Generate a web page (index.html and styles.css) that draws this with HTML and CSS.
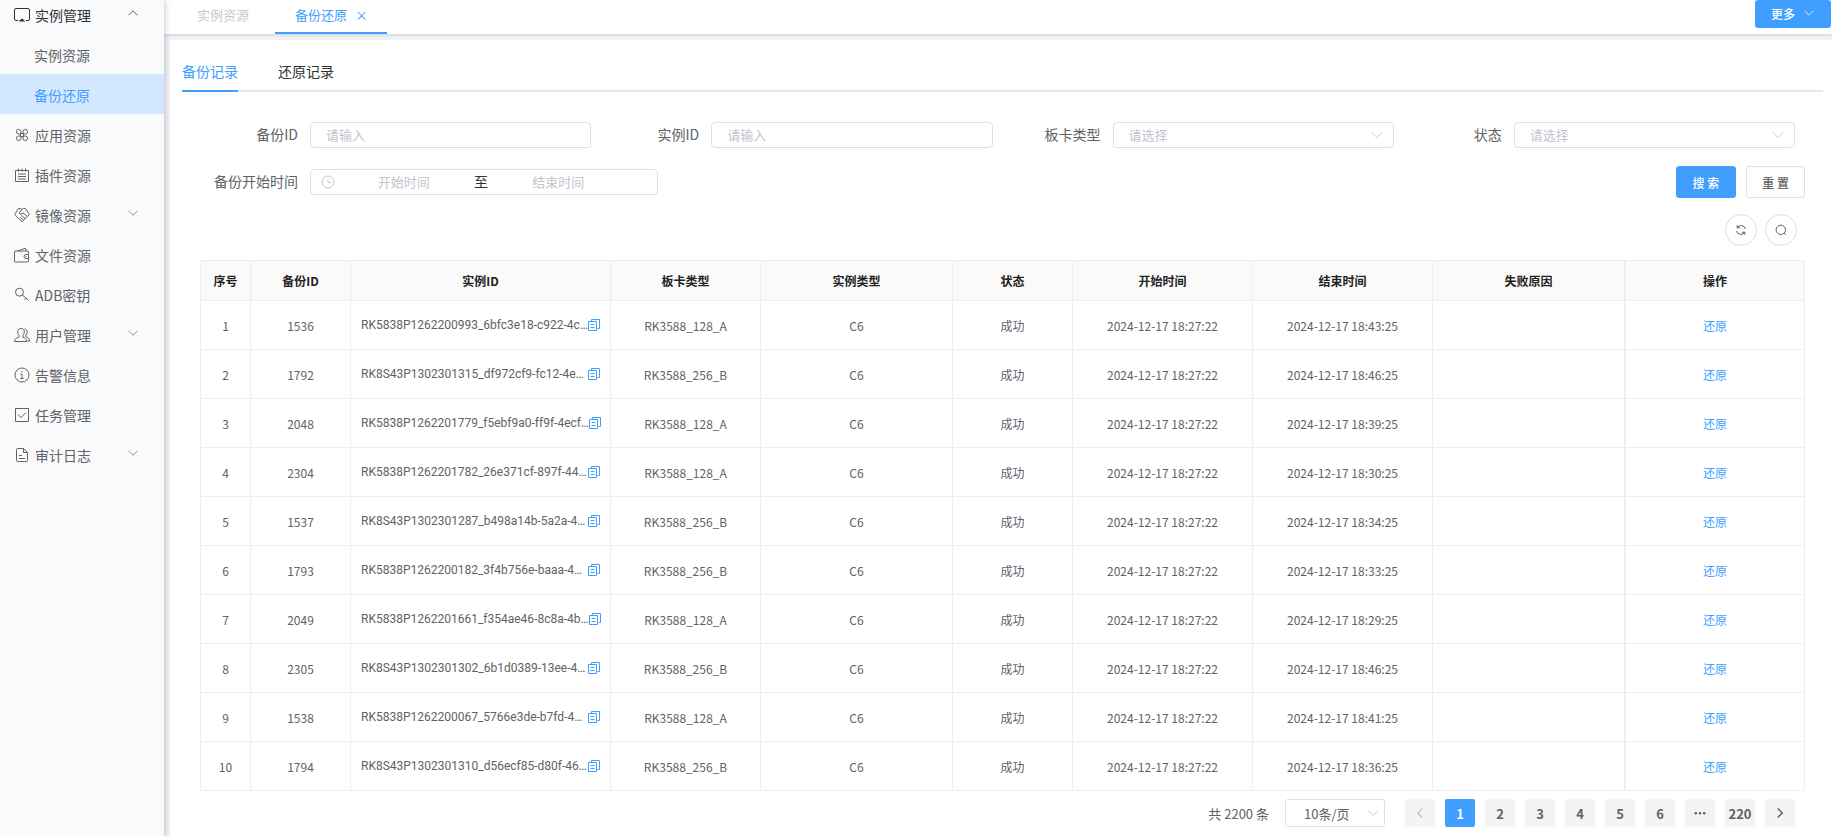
FILE: index.html
```html
<!DOCTYPE html>
<html lang="zh-CN">
<head>
  <meta charset="UTF-8">
  <meta name="viewport" content="width=device-width, initial-scale=1.0">
  <title>备份还原</title>
  <link rel="stylesheet" href="styles.css">
</head>
<body>
  <!-- 图标 -->
  <svg class="sprite" aria-hidden="true">
    <symbol id="i-down" viewBox="0 0 16 16"><path d="M2 5l6 6 6-6"/></symbol>
    <symbol id="i-up" viewBox="0 0 16 16"><path d="M2 11l6-6 6 6"/></symbol>
    <symbol id="i-more" viewBox="0 0 12 12"><path class="solid" d="M1 5.500h1.500v1.500H1zM5.200 5.500h1.500v1.500H5.200zM9.500 5.500H11v1.500H9.500z"/></symbol>
    <symbol id="i-copy" viewBox="0 0 12 12"><path d="M3.500 2.500v-2h8v9h-2M.5 2.500h8v9h-8zM2.500 5.500h4M2.500 8.500h4"/></symbol>
    <symbol id="i-monitor" viewBox="0 0 16 16"><path d="M4 13.500H2A1.500 1.500 0 0 1 .5 12V3A1.500 1.500 0 0 1 2 1.500h12A1.500 1.500 0 0 1 15.500 3v9a1.500 1.500 0 0 1-1.500 1.500h-2"/><path class="solid" d="M8 12l2.500 2h-5z"/></symbol>
    <symbol id="i-apps" viewBox="0 0 16 16"><path d="M7 7H4.800a2.300 2.300 0 1 1 2.200-2.300zM9 7h2.200A2.300 2.300 0 1 0 9 4.700zM7 9H4.800A2.300 2.300 0 1 0 7 11.300zM9 9h2.200A2.300 2.300 0 1 1 9 11.300zM6.500 6.500h3v3h-3z"/></symbol>
    <symbol id="i-note" viewBox="0 0 16 16"><path d="M1.500 3.500h13v11h-13zM4.500 1.500v3M8 1.500v3M11.500 1.500v3M4 7h8M4 9.500h8M4 12h8"/></symbol>
    <symbol id="i-shake" viewBox="0 0 16 16"><path d="M4.500 1.500L.6 7.500l7.400 7.300 7.400-7.300-3.900-6h-2L8 2.500l-1.500-1zM8 2.500L5 6c1 1.800 2.800 1.300 4 0l4.500 3.500M7.500 8.500l4 3M6 10.200l3.500 3"/></symbol>
    <symbol id="i-wallet" viewBox="0 0 16 16"><path d="M14.500 7V5a1 1 0 0 0-1-1h-12a1 1 0 0 0-1 1v9a1 1 0 0 0 1 1h12a1 1 0 0 0 1-1v-2M3.500 4l8-2.800L12.500 4M14.500 7.500H12a2 2 0 0 0 0 4h2.500zM11.500 9.500h1"/></symbol>
    <symbol id="i-key" viewBox="0 0 16 16"><path d="M9.500 5.200a4 4 0 1 1-8 0 4 4 0 0 1 8 0zM8.300 8l6.500 5.500M12 11.200l-1.600 1.700"/></symbol>
    <symbol id="i-users" viewBox="0 0 16 16"><path d="M7 1.500c2.200 0 3.300 1.400 3.300 3.500 0 1.600-.6 2.900-1.500 3.700v1.500c2 .6 3.700 1.500 3.700 4.300H.5c0-2.800 2.200-3.700 4.500-4.300V8.700C4.200 7.900 3.700 6.600 3.700 5 3.700 2.900 4.800 1.500 7 1.500zM10.500 2c1.800.2 2.700 1.400 2.700 3.200 0 1.400-.6 2.500-1.400 3.300v1.300c2 .5 3.700 1.500 3.700 4.200H13"/></symbol>
    <symbol id="i-info" viewBox="0 0 16 16"><path d="M15 8A7 7 0 1 1 1 8a7 7 0 0 1 14 0zM6.500 7H8v4.500M6.300 11.500h3.400M8 4v1.500"/></symbol>
    <symbol id="i-check" viewBox="0 0 16 16"><path d="M1.500 1.500h13v13h-13zM4 7.500l3 3 5-5"/></symbol>
    <symbol id="i-doc" viewBox="0 0 16 16"><path d="M9.500 1.500h-6a1 1 0 0 0-1 1v11a1 1 0 0 0 1 1h9a1 1 0 0 0 1-1v-8zM9.500 1.500v4h4M5 8.500h3M5 11.500h6"/></symbol>
    <symbol id="i-clock" viewBox="0 0 14 14"><path d="M13 7A6 6 0 1 1 1 7a6 6 0 0 1 12 0zM7 3.500v4h3"/></symbol>
    <symbol id="i-refresh" viewBox="0 0 12 12"><path d="M2.200 4.200v-3M2.200 3.700A4.500 4.500 0 0 1 10.400 5M2.200 3.700H5M9.800 7.800v3M9.800 8.300A4.500 4.500 0 0 1 1.600 7M9.800 8.300H7"/></symbol>
    <symbol id="i-search" viewBox="0 0 12 12"><path d="M10.500 5.800a4.700 4.700 0 1 1-9.400 0 4.700 4.700 0 0 1 9.400 0zM9 9.200l1.800 1.800"/></symbol>
  </svg>

  <div class="layout">
    <nav class="sidebar">
      <ul class="menu">
        <li><a class="menu-item open" href="#"><svg class="icon"><use href="#i-monitor"/></svg>实例管理<svg class="arrow"><use href="#i-up"/></svg></a></li>
        <li><a class="menu-item sub" href="#">实例资源</a></li>
        <li><a class="menu-item sub active" href="#">备份还原</a></li>
        <li><a class="menu-item" href="#"><svg class="icon"><use href="#i-apps"/></svg>应用资源</a></li>
        <li><a class="menu-item" href="#"><svg class="icon"><use href="#i-note"/></svg>插件资源</a></li>
        <li><a class="menu-item" href="#"><svg class="icon"><use href="#i-shake"/></svg>镜像资源<svg class="arrow"><use href="#i-down"/></svg></a></li>
        <li><a class="menu-item" href="#"><svg class="icon"><use href="#i-wallet"/></svg>文件资源</a></li>
        <li><a class="menu-item" href="#"><svg class="icon"><use href="#i-key"/></svg>ADB密钥</a></li>
        <li><a class="menu-item" href="#"><svg class="icon"><use href="#i-users"/></svg>用户管理<svg class="arrow"><use href="#i-down"/></svg></a></li>
        <li><a class="menu-item" href="#"><svg class="icon"><use href="#i-info"/></svg>告警信息</a></li>
        <li><a class="menu-item" href="#"><svg class="icon"><use href="#i-check"/></svg>任务管理</a></li>
        <li><a class="menu-item" href="#"><svg class="icon"><use href="#i-doc"/></svg>审计日志<svg class="arrow"><use href="#i-down"/></svg></a></li>
      </ul>
    </nav>

    <div class="main">
      <header class="tabbar">
        <a class="page-tab" href="#">实例资源</a>
        <a class="page-tab active" href="#">备份还原<span class="close">×</span></a>
        <button class="btn-more" type="button">更多<svg class="arrow"><use href="#i-down"/></svg></button>
      </header>

      <main class="card">
        <div class="tabs">
          <a class="tab active" href="#">备份记录</a>
          <a class="tab" href="#">还原记录</a>
        </div>

        <div class="content">
          <form class="search-form">
            <div class="form-row">
              <div class="form-item">
                <label for="backupId">备份ID</label>
                <input class="field" type="text" id="backupId" placeholder="请输入">
              </div>
              <div class="form-item">
                <label for="instanceId">实例ID</label>
                <input class="field" type="text" id="instanceId" placeholder="请输入">
              </div>
              <div class="form-item">
                <label for="boardType">板卡类型</label>
                <div class="select-box">
                  <select class="field" id="boardType">
                    <option value="">请选择</option>
                  </select>
                  <svg class="select-arrow"><use href="#i-down"/></svg>
                </div>
              </div>
              <div class="form-item">
                <label for="status">状态</label>
                <div class="select-box">
                  <select class="field" id="status">
                    <option value="">请选择</option>
                  </select>
                  <svg class="select-arrow"><use href="#i-down"/></svg>
                </div>
              </div>
            </div>
            <div class="form-row second">
              <div class="form-item">
                <label for="startTime">备份开始时间</label>
                <div class="date-range">
                  <svg class="clock"><use href="#i-clock"/></svg>
                  <input type="text" id="startTime" placeholder="开始时间">
                  <span class="separator">至</span>
                  <input type="text" id="endTime" aria-label="结束时间" placeholder="结束时间">
                </div>
              </div>
              <div class="form-buttons">
                <button class="btn primary" type="button">搜 索</button>
                <button class="btn" type="reset">重 置</button>
              </div>
            </div>
          </form>

          <div class="toolbar">
            <button class="btn-circle" type="button" aria-label="刷新"><svg><use href="#i-refresh"/></svg></button>
            <button class="btn-circle" type="button" aria-label="搜索"><svg><use href="#i-search"/></svg></button>
          </div>

          <table class="table">
            <colgroup>
              <col class="w-index"><col class="w-id"><col class="w-instance"><col class="w-board"><col>
              <col class="w-status"><col class="w-time"><col class="w-time"><col><col class="w-time">
            </colgroup>
            <thead>
              <tr>
                <th>序号</th><th>备份ID</th><th>实例ID</th><th>板卡类型</th><th>实例类型</th>
                <th>状态</th><th>开始时间</th><th>结束时间</th><th>失败原因</th><th class="fixed">操作</th>
              </tr>
            </thead>
            <tbody>
              <tr>
                <td>1</td><td>1536</td>
                <td><div class="instance">RK5838P1262200993_6bfc3e18-c922-4c…<svg><use href="#i-copy"/></svg></div></td>
                <td>RK3588_128_A</td><td>C6</td><td>成功</td>
                <td>2024-12-17 18:27:22</td><td>2024-12-17 18:43:25</td><td></td>
                <td class="fixed"><a href="#">还原</a></td>
              </tr>
              <tr>
                <td>2</td><td>1792</td>
                <td><div class="instance">RK8S43P1302301315_df972cf9-fc12-4e…<svg><use href="#i-copy"/></svg></div></td>
                <td>RK3588_256_B</td><td>C6</td><td>成功</td>
                <td>2024-12-17 18:27:22</td><td>2024-12-17 18:46:25</td><td></td>
                <td class="fixed"><a href="#">还原</a></td>
              </tr>
              <tr>
                <td>3</td><td>2048</td>
                <td><div class="instance">RK5838P1262201779_f5ebf9a0-ff9f-4ecf…<svg><use href="#i-copy"/></svg></div></td>
                <td>RK3588_128_A</td><td>C6</td><td>成功</td>
                <td>2024-12-17 18:27:22</td><td>2024-12-17 18:39:25</td><td></td>
                <td class="fixed"><a href="#">还原</a></td>
              </tr>
              <tr>
                <td>4</td><td>2304</td>
                <td><div class="instance">RK5838P1262201782_26e371cf-897f-44…<svg><use href="#i-copy"/></svg></div></td>
                <td>RK3588_128_A</td><td>C6</td><td>成功</td>
                <td>2024-12-17 18:27:22</td><td>2024-12-17 18:30:25</td><td></td>
                <td class="fixed"><a href="#">还原</a></td>
              </tr>
              <tr>
                <td>5</td><td>1537</td>
                <td><div class="instance">RK8S43P1302301287_b498a14b-5a2a-4…<svg><use href="#i-copy"/></svg></div></td>
                <td>RK3588_256_B</td><td>C6</td><td>成功</td>
                <td>2024-12-17 18:27:22</td><td>2024-12-17 18:34:25</td><td></td>
                <td class="fixed"><a href="#">还原</a></td>
              </tr>
              <tr>
                <td>6</td><td>1793</td>
                <td><div class="instance">RK5838P1262200182_3f4b756e-baaa-4…<svg><use href="#i-copy"/></svg></div></td>
                <td>RK3588_256_B</td><td>C6</td><td>成功</td>
                <td>2024-12-17 18:27:22</td><td>2024-12-17 18:33:25</td><td></td>
                <td class="fixed"><a href="#">还原</a></td>
              </tr>
              <tr>
                <td>7</td><td>2049</td>
                <td><div class="instance">RK5838P1262201661_f354ae46-8c8a-4b…<svg><use href="#i-copy"/></svg></div></td>
                <td>RK3588_128_A</td><td>C6</td><td>成功</td>
                <td>2024-12-17 18:27:22</td><td>2024-12-17 18:29:25</td><td></td>
                <td class="fixed"><a href="#">还原</a></td>
              </tr>
              <tr>
                <td>8</td><td>2305</td>
                <td><div class="instance">RK8S43P1302301302_6b1d0389-13ee-4…<svg><use href="#i-copy"/></svg></div></td>
                <td>RK3588_256_B</td><td>C6</td><td>成功</td>
                <td>2024-12-17 18:27:22</td><td>2024-12-17 18:46:25</td><td></td>
                <td class="fixed"><a href="#">还原</a></td>
              </tr>
              <tr>
                <td>9</td><td>1538</td>
                <td><div class="instance">RK5838P1262200067_5766e3de-b7fd-4…<svg><use href="#i-copy"/></svg></div></td>
                <td>RK3588_128_A</td><td>C6</td><td>成功</td>
                <td>2024-12-17 18:27:22</td><td>2024-12-17 18:41:25</td><td></td>
                <td class="fixed"><a href="#">还原</a></td>
              </tr>
              <tr>
                <td>10</td><td>1794</td>
                <td><div class="instance">RK8S43P1302301310_d56ecf85-d80f-46…<svg><use href="#i-copy"/></svg></div></td>
                <td>RK3588_256_B</td><td>C6</td><td>成功</td>
                <td>2024-12-17 18:27:22</td><td>2024-12-17 18:36:25</td><td></td>
                <td class="fixed"><a href="#">还原</a></td>
              </tr>
            </tbody>
          </table>

          <div class="pagination">
            <span class="total">共 2200 条</span>
            <div class="select-box page-size">
              <select class="field" aria-label="每页条数">
                <option>10条/页</option>
              </select>
              <svg class="select-arrow"><use href="#i-down"/></svg>
            </div>
            <button class="page prev" type="button" aria-label="上一页" disabled><svg><use href="#i-down"/></svg></button>
            <button class="page active" type="button">1</button>
            <button class="page" type="button">2</button>
            <button class="page" type="button">3</button>
            <button class="page" type="button">4</button>
            <button class="page" type="button">5</button>
            <button class="page" type="button">6</button>
            <button class="page more" type="button" aria-label="更多页"><svg><use href="#i-more"/></svg></button>
            <button class="page" type="button">220</button>
            <button class="page next" type="button" aria-label="下一页"><svg><use href="#i-down"/></svg></button>
          </div>
        </div>
      </main>
    </div>
  </div>
</body>
</html>
```

FILE: styles.css
```css
* {
  box-sizing: border-box;
}

body {
  margin: 0;
  font-family: "Noto Sans CJK SC", sans-serif;
  font-size: 14px;
  color: #606266;
  background-color: #f0f2f5;
}

a {
  color: inherit;
  text-decoration: none;
}

button,
input,
select {
  font-family: inherit;
}

button {
  cursor: pointer;
}

svg {
  fill: none;
  stroke: currentColor;
  stroke-width: 1px;
  flex-shrink: 0;
}

.solid {
  fill: currentColor;
}

.sprite {
  position: absolute;
  width: 0;
  height: 0;
}

.layout {
  display: flex;
  min-height: 100vh;
}

/* 侧边菜单 */
.sidebar {
  width: 164px;
  flex-shrink: 0;
  background-color: #f9fafc;
  box-shadow: 0 0 6px rgba(0, 21, 41, 0.3);
  z-index: 1;
}

.menu {
  list-style: none;
  margin: -6px 0 0;
  padding: 0;
}

.menu-item {
  display: flex;
  align-items: center;
  height: 40px;
  padding: 2px 25px 0 14px;
}

.menu-item .icon {
  width: 16px;
  height: 16px;
  margin-right: 5px;
}

.menu-item .arrow {
  margin-bottom: 4px;
}

.menu-item.sub {
  padding-left: 34px;
}

.menu-item.open {
  color: #303133;
}

.menu-item.active {
  color: #409eff;
  background-color: #d3e8fe;
}

.arrow {
  width: 12px;
  height: 12px;
  margin-left: auto;
}

.main {
  flex: 1;
  min-width: 0;
  display: flex;
  flex-direction: column;
}

/* 顶部标签栏 */
.tabbar {
  display: flex;
  gap: 6px;
  height: 34px;
  padding: 0 1px 0 13px;
  background-color: #fff;
  box-shadow: 0 1px 3px rgba(0, 0, 0, 0.15);
}

.page-tab {
  display: flex;
  align-items: center;
  gap: 8px;
  padding: 0 20px 6px;
  font-size: 13px;
  color: #c8c9cc;
}

.page-tab.active {
  color: #409eff;
  border-bottom: 2px solid #409eff;
  padding-bottom: 4px;
}

.page-tab .close {
  width: 12px;
  text-align: center;
}

.btn-more {
  display: flex;
  align-items: center;
  width: 76px;
  height: 28px;
  margin-left: auto;
  padding: 0 16px 2px;
  border: none;
  border-radius: 3px;
  background-color: #409eff;
  color: #fff;
  font-size: 12px;
  font-weight: 500;
}

.card {
  flex: 1;
  margin: 6px 0 0 6px;
  padding: 0 9px 10px 12px;
  border-radius: 4px 0 0 0;
  background-color: #fff;
}

.tabs {
  display: flex;
  gap: 40px;
  height: 52px;
  border-bottom: 2px solid #e4e7ed;
}

.tab {
  height: 52px;
  padding-top: 11px;
  line-height: 40px;
  color: #303133;
}

.tab.active {
  color: #409eff;
  border-bottom: 2px solid #409eff;
}

.content {
  padding: 30px 18px 0;
}

/* 查询表单 */
.form-row {
  display: flex;
}

.form-row.second {
  margin-top: 18px;
  justify-content: space-between;
}

.form-item {
  flex: 1;
  display: flex;
  align-items: center;
  padding-right: 10px;
}

.second .form-item {
  flex: none;
}

.form-item label {
  width: 110px;
  padding-right: 12px;
  padding-bottom: 2px;
  text-align: right;
  flex-shrink: 0;
}

.field {
  display: block;
  flex: 1;
  width: 100%;
  min-width: 0;
  height: 26px;
  padding: 0 15px 2px;
  border: 1px solid #dcdfe6;
  border-radius: 4px;
  background-color: #fff;
  font-size: 13px;
  color: #606266;
  appearance: none;
}

select.field {
  color: #c0c4cc;
}

::placeholder {
  color: #c0c4cc;
}

.select-box {
  position: relative;
  flex: 1;
}

.select-arrow {
  position: absolute;
  top: 50%;
  right: 10px;
  width: 14px;
  height: 14px;
  margin-top: -7px;
  color: #c0c4cc;
  pointer-events: none;
}

.date-range {
  display: flex;
  align-items: center;
  width: 348px;
  height: 26px;
  padding: 0 35px 0 10px;
  border: 1px solid #dcdfe6;
  border-radius: 4px;
}

.date-range .clock {
  width: 14px;
  height: 14px;
  margin-right: 5px;
  color: #c0c4cc;
}

.date-range input {
  flex: 1;
  min-width: 0;
  padding: 0 0 2px;
  border: none;
  font-size: 13px;
  text-align: center;
}

.date-range .separator {
  width: 27px;
  padding-bottom: 2px;
  text-align: center;
  color: #303133;
}

.form-buttons {
  display: flex;
  gap: 10px;
}

.btn {
  height: 32px;
  padding: 0 15px;
  border: 1px solid #dcdfe6;
  border-radius: 3px;
  background-color: #fff;
  font-size: 12px;
  font-weight: 500;
  color: #606266;
}

.btn.primary {
  padding: 0 16px;
  border-color: #409eff;
  background-color: #409eff;
  color: #fff;
}

.toolbar {
  display: flex;
  justify-content: flex-end;
  gap: 8px;
  margin-top: 16px;
  padding-right: 8px;
}

.btn-circle {
  display: flex;
  align-items: center;
  justify-content: center;
  width: 32px;
  height: 32px;
  padding: 0;
  border: 1px solid #dcdfe6;
  border-radius: 50%;
  background-color: #fff;
  color: #606266;
}

.btn-circle svg {
  width: 12px;
  height: 12px;
}

/* 表格 */
.table {
  width: 100%;
  margin-top: 14px;
  table-layout: fixed;
  border-collapse: separate;
  border-spacing: 0;
  border-top: 1px solid #ebeef5;
  border-left: 1px solid #ebeef5;
  font-size: 12px;
  text-align: center;
}

.table th,
.table td {
  padding: 0 10px;
  border-right: 1px solid #ebeef5;
  border-bottom: 1px solid #ebeef5;
}

.table th {
  height: 40px;
  background-color: #fafafa;
  color: #222;
}

.table td {
  height: 49px;
}

.table .fixed {
  border-left: 1px solid #ebeef5;
}

.table a {
  color: #409eff;
}

.w-index {
  width: 50px;
}

.w-id {
  width: 100px;
}

.w-instance {
  width: 260px;
}

.w-board {
  width: 150px;
}

.w-status {
  width: 120px;
}

.w-time {
  width: 180px;
}

.instance {
  display: flex;
  align-items: center;
  justify-content: space-between;
  font-family: Roboto, "Noto Sans CJK SC", sans-serif;
  white-space: nowrap;
}

.instance svg {
  width: 12px;
  height: 12px;
  color: #409eff;
}

/* 分页 */
.pagination {
  display: flex;
  justify-content: flex-end;
  align-items: center;
  gap: 10px;
  margin-top: 8px;
  padding-right: 10px;
  font-size: 13px;
}

.total {
  margin-right: 6px;
}

.page-size {
  flex: none;
  width: 100px;
  margin-right: 10px;
}

.page-size .field {
  height: 28px;
  padding: 0 18px;
  border-radius: 3px;
  color: #606266;
}

.page-size .select-arrow {
  right: 5px;
}

.page {
  display: flex;
  align-items: center;
  justify-content: center;
  width: 30px;
  height: 28px;
  padding: 0;
  border: none;
  border-radius: 2px;
  background-color: #f4f4f5;
  color: #606266;
  font-size: 13px;
  font-weight: bold;
}

.page.active {
  background-color: #409eff;
  color: #fff;
}

.page:disabled {
  color: #c0c4cc;
}

.page svg {
  width: 12px;
  height: 12px;
  stroke-width: 2px;
}

.page.more svg {
  stroke-width: 1px;
}

.prev svg {
  transform: rotate(90deg);
}

.next svg {
  transform: rotate(-90deg);
}
```
